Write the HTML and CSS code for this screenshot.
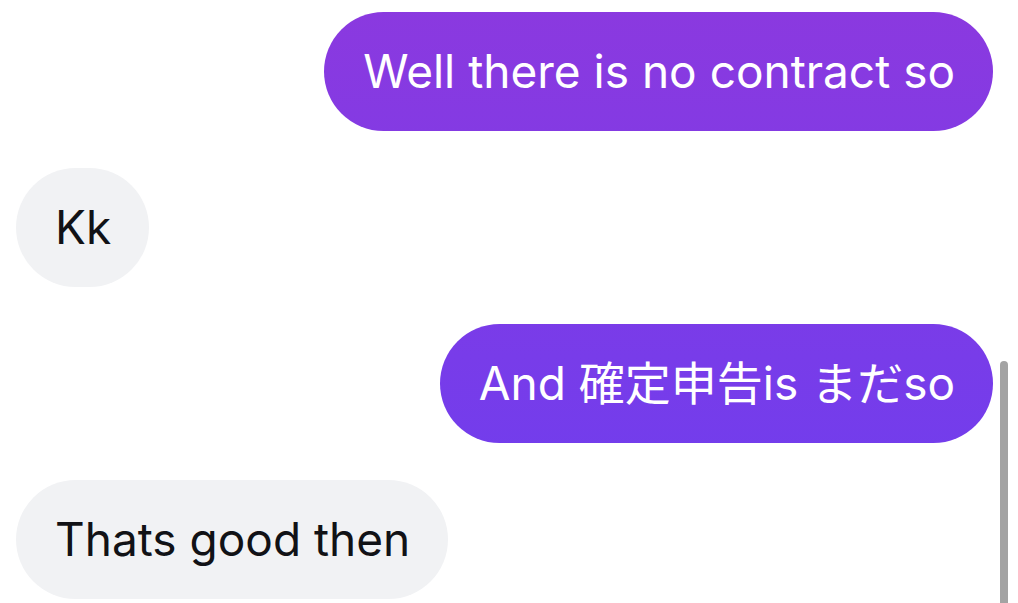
FILE: index.html
```html
<!DOCTYPE html>
<html lang="en">
<head>
	<meta charset="UTF-8">
	<title>Chat</title>
	<link rel="stylesheet" href="styles.css">
</head>
<body>
	<div class="thread">
		<div class="msg me">Well there is no contract so</div>
		<div class="msg them">Kk</div>
		<div class="msg me">And 確定申告is まだso</div>
		<div class="msg them">Thats good then</div>
	</div>
	<div class="scrollbar"></div>
</body>
</html>
```
FILE: styles.css
```css
*{
	margin: 0;
	padding: 0;
	box-sizing: border-box;
}
html,body{
	height: 100%;
	overflow: hidden;
	background: #fff;
}
body{
	font-family: Inter, "Noto Sans CJK JP", sans-serif;
}
.thread{
	display: flex;
	flex-direction: column;
	gap: 37px;
	padding: 12px 25px 0 16px;
}
.msg{
	height: 119px;
	padding: 0 38px 0 39px;
	border-radius: 60px;
	font-size: 46px;
	line-height: 119px;
	white-space: nowrap;
}
.me{
	align-self: flex-end;
	color: #fff;
	background: linear-gradient(180deg,#8b39df 0%,#6b3ef0 100%) fixed;
}
.me.cjk{
	letter-spacing: 0.3px;
}
.them{
	align-self: flex-start;
	color: #111216;
	background: #f1f2f4;
}
.scrollbar{
	position: absolute;
	top: 361px;
	right: 10px;
	width: 8px;
	height: 260px;
	border-radius: 4px;
	background: #a3a3a3;
}
```
